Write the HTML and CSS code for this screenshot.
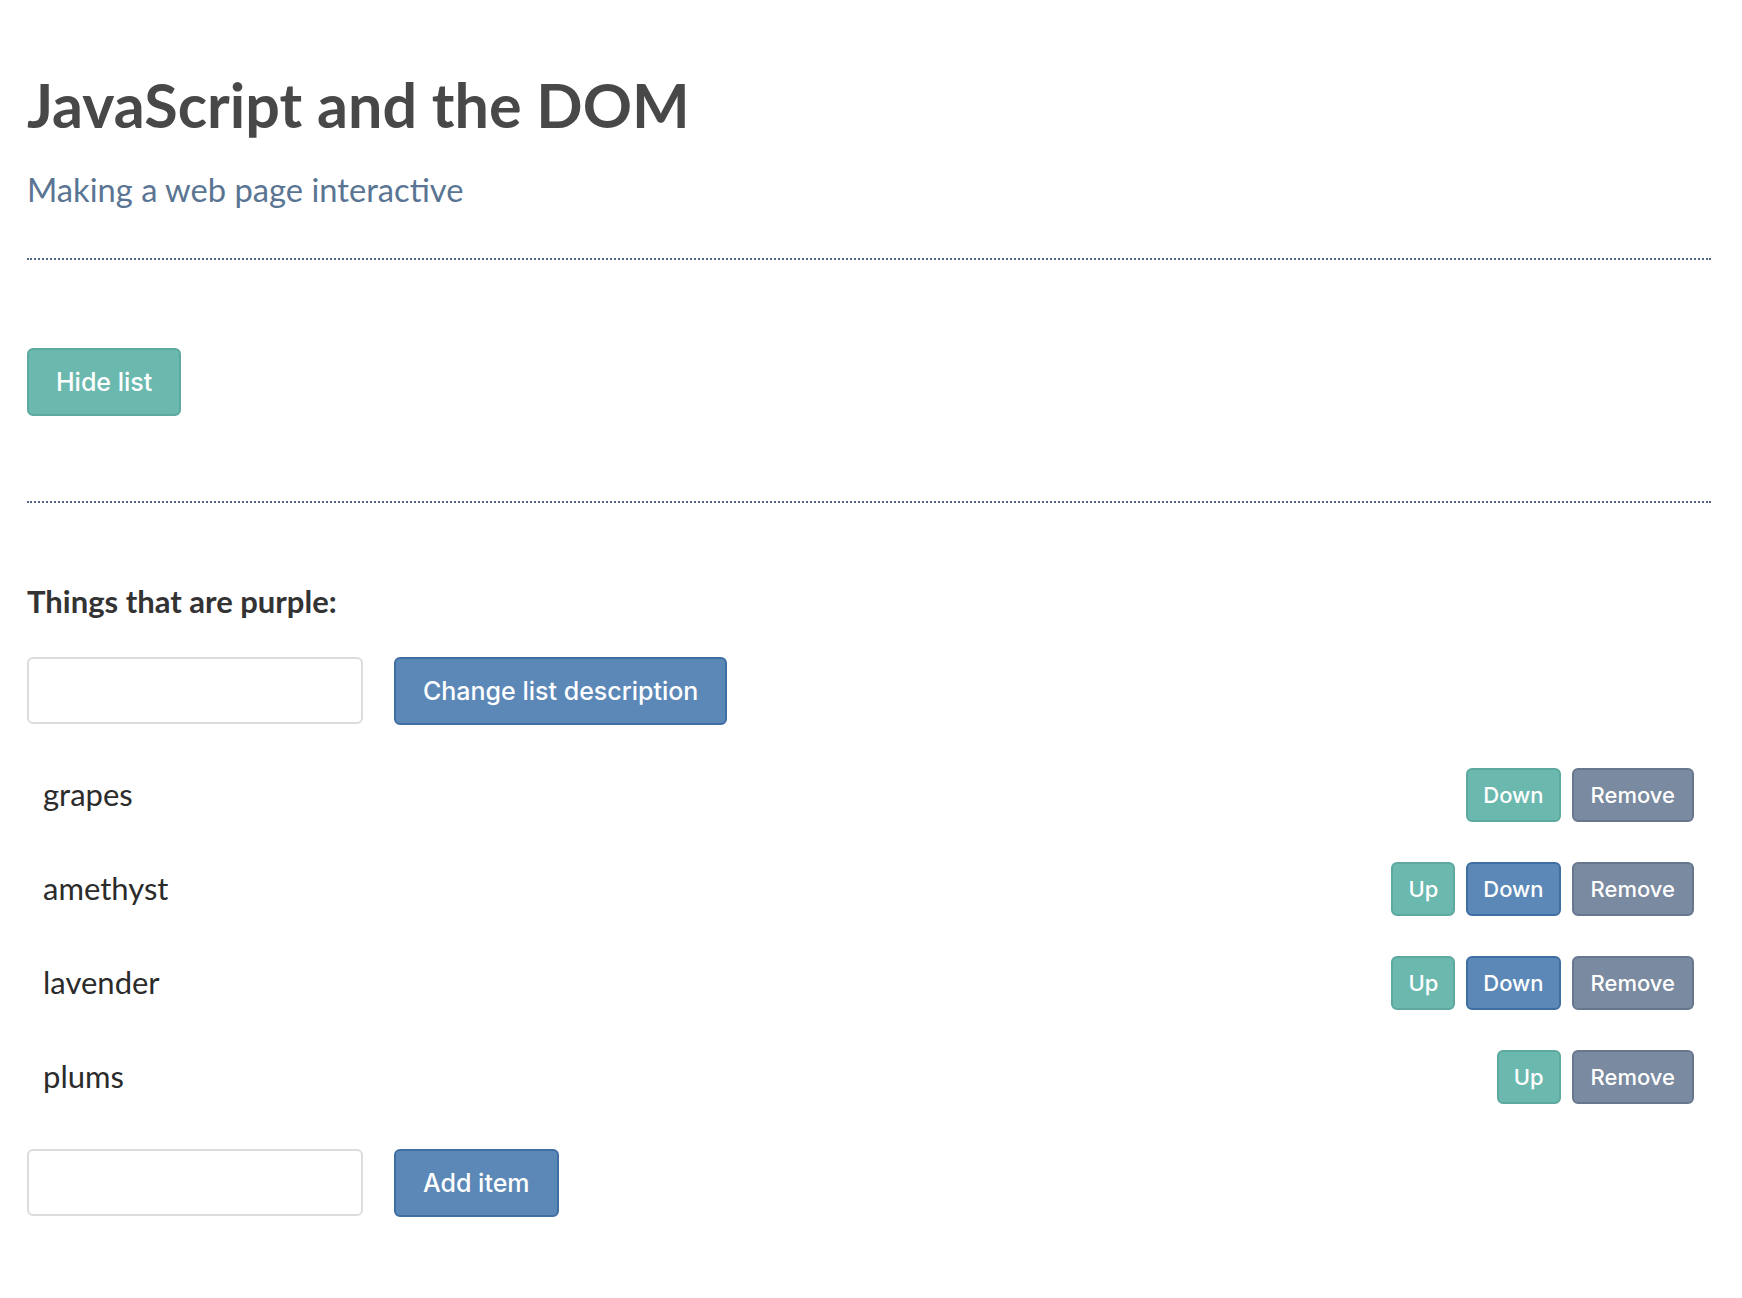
FILE: index.html
```html
<!DOCTYPE html>
<html>
<head>
<meta charset="utf-8">
<title>JavaScript and the DOM</title>
<link rel="stylesheet" href="styles.css">
</head>
<body>
<div class="page">
  <h1 class="title">JavaScript and the DOM</h1>
  <p class="subtitle">Making a web page interactive</p>
  <div class="divider"></div>
  <div class="toggle-row">
    <button class="btn btn-big btn-teal">Hide list</button>
  </div>
  <div class="divider"></div>
  <p class="list-desc">Things that are purple:</p>
  <div class="form-row">
    <input class="field" type="text">
    <button class="btn btn-big btn-blue">Change list description</button>
  </div>
  <ul class="items">
    <li class="item">
      <span class="item-name">grapes</span>
      <span class="actions">
        <button class="btn btn-small btn-teal">Down</button>
        <button class="btn btn-small btn-slate">Remove</button>
      </span>
    </li>
    <li class="item">
      <span class="item-name">amethyst</span>
      <span class="actions">
        <button class="btn btn-small btn-teal">Up</button>
        <button class="btn btn-small btn-blue">Down</button>
        <button class="btn btn-small btn-slate">Remove</button>
      </span>
    </li>
    <li class="item">
      <span class="item-name">lavender</span>
      <span class="actions">
        <button class="btn btn-small btn-teal">Up</button>
        <button class="btn btn-small btn-blue">Down</button>
        <button class="btn btn-small btn-slate">Remove</button>
      </span>
    </li>
    <li class="item">
      <span class="item-name">plums</span>
      <span class="actions">
        <button class="btn btn-small btn-teal">Up</button>
        <button class="btn btn-small btn-slate">Remove</button>
      </span>
    </li>
  </ul>
  <div class="form-row">
    <input class="field" type="text">
    <button class="btn btn-big btn-blue">Add item</button>
  </div>
</div>
</body>
</html>
```
FILE: styles.css
```css
html, body {
  margin: 0;
  padding: 0;
  background: #ffffff;
}

.page {
  padding: 68px 31px 60px 27px;
  font-family: Lato, "Open Sans", sans-serif;
  color: #2f2f2f;
}

.title {
  margin: 0;
  font-size: 61px;
  line-height: 1.2;
  font-weight: 700;
  color: #484848;
}

.subtitle {
  margin: 29px 0 0;
  font-size: 32.7px;
  line-height: 1.2;
  font-weight: 400;
  color: #5a7593;
}

.divider {
  border-top: 2px dotted #4f6687;
  height: 0;
}

.subtitle + .divider {
  margin-top: 49px;
}

.toggle-row {
  padding: 88px 0 85px;
  display: flex;
}

.list-desc {
  margin: 80px 0 0;
  font-size: 31px;
  line-height: 1.2;
  font-weight: 700;
  color: #333333;
}

.form-row {
  display: flex;
  align-items: center;
  gap: 31px;
}

.list-desc + .form-row {
  margin-top: 36px;
}

.field {
  box-sizing: border-box;
  width: 336px;
  height: 67px;
  margin: 0;
  border: 2px solid #dcdcdc;
  border-radius: 6px;
  background: #fff;
  font-size: 20px;
  outline: none;
}

.btn {
  font-family: Inter, "Liberation Sans", sans-serif;
  font-weight: 500;
  color: #ffffff;
  border-radius: 6px;
  border: 2px solid transparent;
  box-sizing: border-box;
  margin: 0;
  cursor: pointer;
}

.btn-big {
  height: 68px;
  padding: 0 27px;
  font-size: 25px;
}

.btn-small {
  height: 54px;
  padding: 0 15px;
  font-size: 22px;
}

.btn-teal {
  background: #6bb8af;
  border-color: #5da99f;
}

.btn-blue {
  background: #5b88b7;
  border-color: #3f6ea2;
}

.btn-slate {
  background: #7a8aa0;
  border-color: #67778d;
  padding: 0 17px;
}

.items {
  list-style: none;
  margin: 23px 0 25px;
  padding: 0;
}

.item {
  display: flex;
  align-items: center;
  justify-content: space-between;
  height: 94px;
  padding: 0 17px 0 16px;
}

.item-name {
  font-size: 31px;
  line-height: 1.2;
  color: #2b2b2b;
}

.actions {
  display: flex;
  gap: 11px;
}
```
